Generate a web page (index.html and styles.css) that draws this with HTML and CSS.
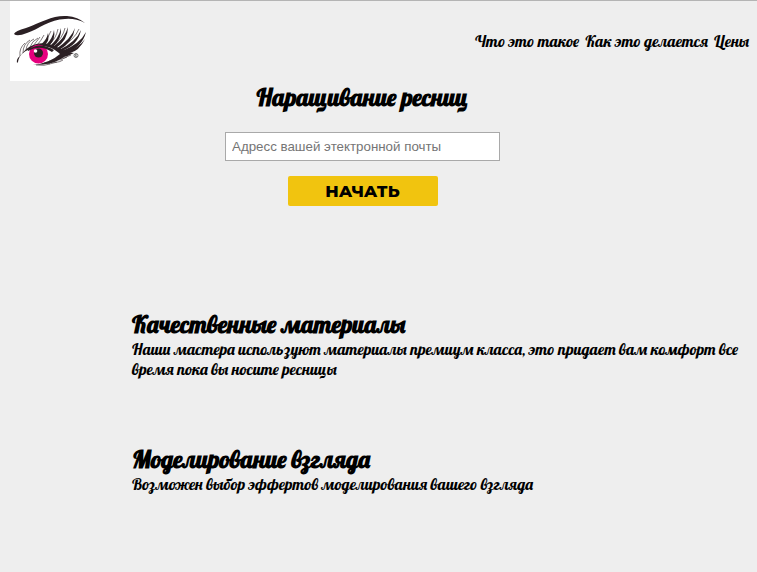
FILE: index.html
```html
<!DOCTYPE html>
<html lang="ru">
<head>
<meta charset="utf-8">
<title>Наращивание ресниц</title>
<link rel="stylesheet" href="styles.css">
</head>
<body>
<header class="header">
  <svg class="logo" viewBox="0 0 80 80" aria-hidden="true">
    <rect width="80" height="80" fill="#fff"/>
    <g fill="#2b2024">
      <path d="M4 33Q5 30 16 27C32 21 43 14 57 15Q68 16 75 22Q65 17 55 18C40 18 29 28 17 32Q7 36 4 33Z"/>
      <path d="M7 62Q6 58 10 55C19 43 30 40 42 44C49 46 54 51 64 52Q58 55 54 56C47 61 38 64 23 64Q40 62 50 53C42 45 30 43 21 48C13 50 9 55 8 61Z"/>
    </g>
    <circle cx="28.5" cy="53" r="9.5" fill="#e6007e"/>
    <path d="M18 49Q29 40 44 49L42 51Q30 43 18 50Z" fill="#2b2024"/>
    <circle cx="28.5" cy="52" r="4.5" fill="#2b2024"/>
    <circle cx="25.5" cy="50" r="1.8" fill="#fff"/>
    <g fill="#2b2024">
      <path d="M32 43Q37 38 38 32Q40 39 35 44Z"/>
      <path d="M36 44Q43 37 44 29Q46 38 39 45Z"/>
      <path d="M40 45Q49 37 51 27Q52 38 43 46Z"/>
      <path d="M43 46Q55 37 58 26Q58 39 46 47Z"/>
      <path d="M46 48Q61 38 65 27Q63 41 49 49Z"/>
      <path d="M49 49Q66 41 71 29Q68 44 52 50Z"/>
      <path d="M52 50Q70 43 76 31Q72 47 55 52Z"/>
      <path d="M55 51Q69 47 75 38Q69 50 60 52Z"/>
    </g>
    <g fill="none" stroke="#2b2024" stroke-width=".6">
      <path d="M10 55Q9 47 15 42M13 52Q13 43 20 39M16 49Q17 41 24 38M20 46Q22 40 28 37M23 45Q27 40 30 36M27 44Q31 40 34 34M31 44Q39 37 41 30M38 45Q46 38 48 28M42 46Q53 37 55 27M48 49Q65 38 69 28"/>
      <path d="M26 64Q35 65 40 63M34 62Q41 64 47 61M39 60Q47 63 53 59M43 59Q51 60 57 56M47 57Q55 58 61 54"/>
    </g>
    <circle cx="66" cy="54.5" r="2" fill="none" stroke="#555" stroke-width=".8"/>
    <path d="M65.4 55.8V53.4H66.2Q67.4 54.2 65.7 54.6L67 55.8" fill="none" stroke="#555" stroke-width=".6"/>
  </svg>
  <nav class="nav">
    <a>Что это такое</a>
    <a>Как это делается</a>
    <a>Цены</a>
  </nav>
</header>
<main>
  <section class="hero">
    <h1>Наращивание ресниц</h1>
    <input class="email" type="email" placeholder="Адресс вашей этектронной почты">
    <button class="start">НАЧАТЬ</button>
  </section>
  <section class="feature">
    <h2>Качественные материалы</h2>
    <p>Наши мастера используют материалы премиум класса, это придает вам комфорт все<br>время пока вы носите ресницы</p>
  </section>
  <section class="feature">
    <h2>Моделирование взгляда</h2>
    <p>Возможен выбор эффертов моделирования вашего взгляда</p>
  </section>
</main>
</body>
</html>
```
FILE: styles.css
```css
* { box-sizing: border-box; }
body {
  margin: 0;
  height: 572px;
  overflow: hidden;
  border-top: 1px solid #b4b4b4;
  background: #eee;
  color: #000;
  font: 16px/20px Lobster, "Liberation Serif", serif;
}
.header {
  display: flex;
  justify-content: space-between;
  height: 80px;
  padding: 0 8px 0 10px;
}
.logo { width: 80px; height: 80px; }
.nav { display: flex; gap: 6px; padding-top: 30px; white-space: nowrap; }
.hero {
  display: flex;
  flex-direction: column;
  align-items: center;
  width: 725px;
  height: 227px;
}
h1, h2, p { margin: 0; white-space: nowrap; }
h1, h2 { height: 31px; font-size: 24px; line-height: 33px; }
h1 { margin-bottom: 20px; }
.email {
  width: 275px;
  height: 29px;
  margin: 0 0 15px;
  padding: 0 6px;
  border: 1px solid #a9a9a9;
  background: #fff;
  font: 13.333px "Liberation Sans", sans-serif;
}
.email::placeholder { color: #757575; opacity: 1; }
.start {
  width: 150px;
  height: 30px;
  padding: 0;
  border: 0;
  border-radius: 2px;
  background: #f1c40f;
  color: #000;
  font: 800 16.5px Montserrat, "Open Sans", sans-serif;
}
.feature { height: 135px; padding-left: 132px; }
```
